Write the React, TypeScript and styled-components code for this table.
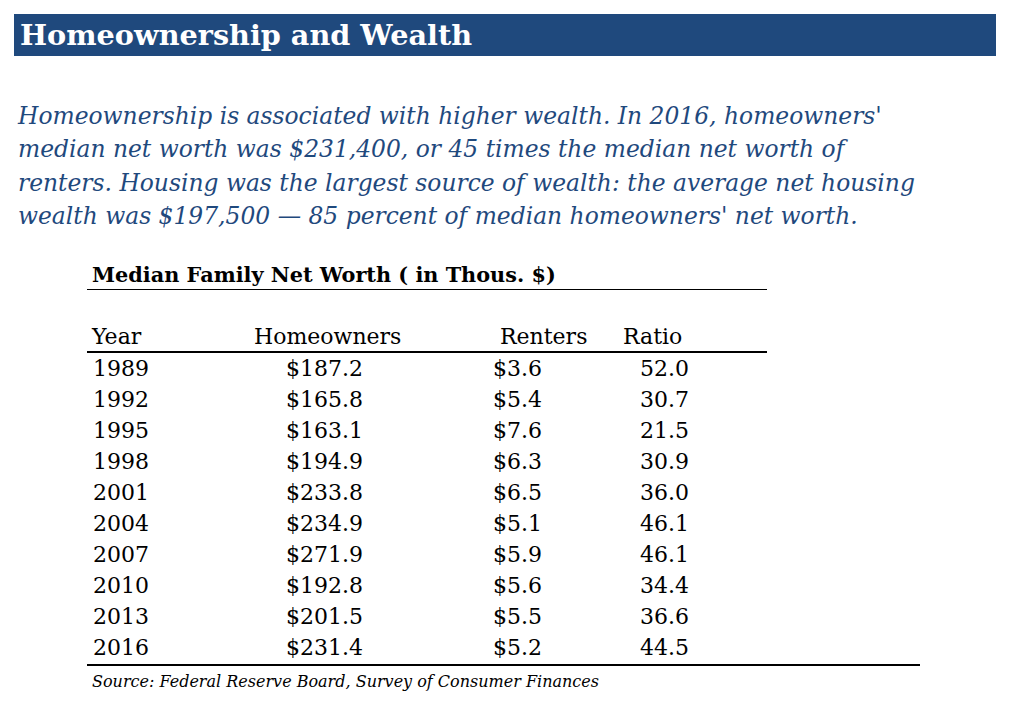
import React from "react";
import styled, { createGlobalStyle } from "styled-components";

const Global = createGlobalStyle`
  html, body { margin: 0; padding: 0; background: #ffffff; }
  body { font-family: "DejaVu Serif", "Liberation Serif", serif; }
`;

const Page = styled.div`
  width: 1009px;
  height: 701px;
  padding: 14px 13px 0 14px;
  box-sizing: border-box;
  overflow: hidden;
`;

const TitleBar = styled.h1`
  margin: 0;
  height: 42px;
  background: #1f497d;
  color: #ffffff;
  font-family: "DejaVu Serif", serif;
  font-weight: bold;
  font-size: 28.7px;
  line-height: 42px;
  padding-left: 6px;
`;

const Intro = styled.p`
  margin: 44px 0 0 4px;
  color: #1f497d;
  font-family: "DejaVu Serif", serif;
  font-style: italic;
  font-size: 23.4px;
  line-height: 33.4px;
`;

const Line = styled.span`
  display: block;
  white-space: nowrap;
`;

const TableWrap = styled.section`
  margin: 27px 0 0 73px;
  width: 833px;
`;

const TableTitle = styled.div`
  width: 680px;
  box-sizing: border-box;
  padding-left: 5px;
  font-family: "DejaVu Serif", serif;
  font-weight: bold;
  font-size: 20.8px;
  line-height: 28px;
  color: #000;
  border-bottom: 1px solid #000;
`;

const Grid = styled.div`
  display: grid;
  grid-template-columns: 167px 206px 136px 171px;
  width: 680px;
  font-family: "DejaVu Serif", serif;
  font-size: 22px;
  color: #000;
`;

const HeaderRow = styled(Grid)`
  margin-top: 32px;
  height: 29px;
  line-height: 30px;
  border-bottom: 2px solid #000;
`;

const Body = styled.div`
  width: 833px;
  border-bottom: 2px solid #000;
`;

const Row = styled(Grid)`
  height: 31.1px;
  line-height: 32.5px;
`;

const Cell = styled.div<{ $pad: number }>`
  padding-left: ${(p) => p.$pad}px;
  white-space: nowrap;
`;

const Source = styled.div`
  padding-left: 5px;
  margin-top: 5px;
  font-family: "DejaVu Serif", serif;
  font-style: italic;
  font-size: 16px;
  line-height: 22px;
  color: #000;
`;

const rows: [string, string, string, string][] = [
  ["1989", "$187.2", "$3.6", "52.0"],
  ["1992", "$165.8", "$5.4", "30.7"],
  ["1995", "$163.1", "$7.6", "21.5"],
  ["1998", "$194.9", "$6.3", "30.9"],
  ["2001", "$233.8", "$6.5", "36.0"],
  ["2004", "$234.9", "$5.1", "46.1"],
  ["2007", "$271.9", "$5.9", "46.1"],
  ["2010", "$192.8", "$5.6", "34.4"],
  ["2013", "$201.5", "$5.5", "36.6"],
  ["2016", "$231.4", "$5.2", "44.5"],
];

export default function App() {
  return (
    <Page>
      <Global />
      <TitleBar>Homeownership and Wealth</TitleBar>
      <Intro>
        <Line>Homeownership is associated with higher wealth. In 2016, homeowners'</Line>
        <Line>median net worth was $231,400, or 45 times the median net worth of</Line>
        <Line>renters. Housing was the largest source of wealth: the average net housing</Line>
        <Line>wealth was $197,500 — 85 percent of median homeowners' net worth.</Line>
      </Intro>
      <TableWrap>
        <TableTitle>Median Family Net Worth ( in Thous. $)</TableTitle>
        <HeaderRow>
          <Cell $pad={5}>Year</Cell>
          <Cell $pad={0}>Homeowners</Cell>
          <Cell $pad={40}>Renters</Cell>
          <Cell $pad={27}>Ratio</Cell>
        </HeaderRow>
        <Body>
          {rows.map((r) => (
            <Row key={r[0]}>
              <Cell $pad={6}>{r[0]}</Cell>
              <Cell $pad={32}>{r[1]}</Cell>
              <Cell $pad={33}>{r[2]}</Cell>
              <Cell $pad={44}>{r[3]}</Cell>
            </Row>
          ))}
        </Body>
        <Source>Source: Federal Reserve Board, Survey of Consumer Finances</Source>
      </TableWrap>
    </Page>
  );
}
